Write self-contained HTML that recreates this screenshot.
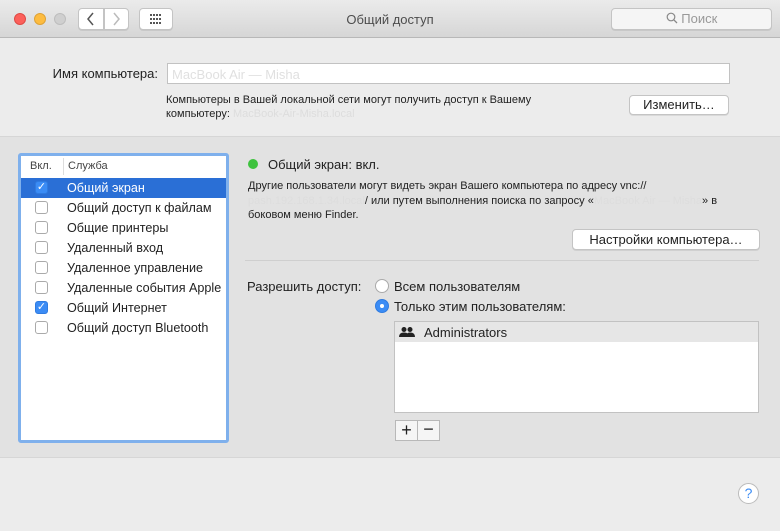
<!DOCTYPE html><html><head><meta charset="utf-8"><style>
*{box-sizing:border-box;margin:0;padding:0}
body{width:780px;height:531px;overflow:hidden;background:#ececec;font-family:"Liberation Sans",sans-serif;color:#222;position:relative;font-size:13px}
.a{position:absolute;white-space:nowrap}
.tb{position:absolute;left:0;top:0;width:780px;height:38px;background:linear-gradient(#ebebeb,#d6d6d6);border-bottom:1px solid #b8b8b8}
.dot{position:absolute;width:12px;height:12px;border-radius:50%;top:13px}
.btn{position:absolute;background:#fff;border:1px solid #c4c4c4;border-radius:4px;box-shadow:0 1px 0 rgba(0,0,0,.08);text-align:center;font-size:13px}
.cb{position:absolute;left:35px;width:13px;height:13px;border:1px solid #aaa;border-radius:3px;background:#fff}
.cb.on{background:#3b8cf5;border-color:#2f7be0;color:#fff;font-size:11px;line-height:11px;text-align:center}
.row{position:absolute;font-size:12.6px}
</style></head><body>
<div class="tb"></div>
<div class="dot" style="left:14px;background:#fc605b;border:1px solid #de4a45"></div>
<div class="dot" style="left:34px;background:#fdbc40;border:1px solid #dea236"></div>
<div class="dot" style="left:54px;background:#cfcfcf;border:1px solid #bdbdbd"></div>
<div class="btn" style="left:78px;top:8px;width:26px;height:22px;border-radius:4px 0 0 4px"><svg width="24" height="20" viewBox="0 0 24 20"><path d="M14 4 L9 10 L14 16" fill="none" stroke="#555" stroke-width="1.5"/></svg></div>
<div class="btn" style="left:104px;top:8px;width:25px;height:22px;border-radius:0 4px 4px 0"><svg width="23" height="20" viewBox="0 0 23 20"><path d="M9 4 L14 10 L9 16" fill="none" stroke="#bbb" stroke-width="1.5"/></svg></div>
<div class="btn" style="left:139px;top:8px;width:34px;height:22px"><svg width="32" height="20" viewBox="0 0 32 20"><g fill="#555"><rect x="10" y="5" width="2" height="2"/><rect x="13" y="5" width="2" height="2"/><rect x="16" y="5" width="2" height="2"/><rect x="19" y="5" width="2" height="2"/><rect x="10" y="9" width="2" height="2"/><rect x="13" y="9" width="2" height="2"/><rect x="16" y="9" width="2" height="2"/><rect x="19" y="9" width="2" height="2"/><rect x="10" y="13" width="2" height="2"/><rect x="13" y="13" width="2" height="2"/><rect x="16" y="13" width="2" height="2"/><rect x="19" y="13" width="2" height="2"/></g></svg></div>
<div class="a" style="left:0;width:780px;text-align:center;top:12px;color:#4d4d4d">Общий доступ</div>
<div class="btn" style="left:611px;top:8px;width:161px;height:22px;color:#999;line-height:20px;background:#f5f5f5"><svg width="12" height="12" viewBox="0 0 12 12" style="vertical-align:-1px"><circle cx="5" cy="5" r="3.8" fill="none" stroke="#888" stroke-width="1.2"/><path d="M7.8 7.8 L11 11" stroke="#888" stroke-width="1.3"/></svg> Поиск</div>

<div class="a" style="right:622px;top:66px">Имя компьютера:</div>
<div class="a" style="left:167px;top:63px;width:563px;height:21px;background:#fff;border:1px solid #c2c2c2;color:#e0e0e0;padding:3px 4px">MacBook Air — Misha</div>
<div class="a" style="left:166px;top:93px;font-size:11px;line-height:14px">Компьютеры в Вашей локальной сети могут получить доступ к Вашему<br>компьютеру: <span style="color:#ddd">MacBook-Air-Misha.local</span></div>
<div class="btn" style="left:629px;top:95px;width:100px;height:20px;line-height:18px">Изменить…</div>

<div class="a" style="left:0;top:136px;width:780px;height:322px;background:#e2e2e2;border-top:1px solid #d6d6d6;border-bottom:1px solid #d6d6d6"></div>

<div class="a" style="left:18px;top:153px;width:211px;height:290px;background:#fff;border:3px solid #7fb0ec;border-radius:3px"></div>
<div class="a" style="left:30px;top:160px;font-size:11px;color:#444">Вкл.</div>
<div class="a" style="left:63px;top:158px;width:1px;height:17px;background:#ddd"></div>
<div class="a" style="left:68px;top:160px;font-size:11px;color:#444">Служба</div>
<div class="a" style="left:21px;top:178px;width:205px;height:20px;background:#2a6fd6"></div>
<div class="cb on" style="top:181px">✓</div><div class="row a" style="left:67px;top:181px;color:#fff">Общий экран</div>
<div class="cb" style="top:201px"></div><div class="row a" style="left:67px;top:201px">Общий доступ к файлам</div>
<div class="cb" style="top:221px"></div><div class="row a" style="left:67px;top:221px">Общие принтеры</div>
<div class="cb" style="top:241px"></div><div class="row a" style="left:67px;top:241px">Удаленный вход</div>
<div class="cb" style="top:261px"></div><div class="row a" style="left:67px;top:261px">Удаленное управление</div>
<div class="cb" style="top:281px"></div><div class="row a" style="left:67px;top:281px">Удаленные события Apple</div>
<div class="cb on" style="top:301px">✓</div><div class="row a" style="left:67px;top:301px">Общий Интернет</div>
<div class="cb" style="top:321px"></div><div class="row a" style="left:67px;top:321px">Общий доступ Bluetooth</div>

<div class="a" style="left:248px;top:159px;width:10px;height:10px;border-radius:50%;background:#3ec23e"></div>
<div class="a" style="left:268px;top:157px">Общий экран: вкл.</div>
<div class="a" style="left:248px;top:179px;font-size:11px;line-height:14.5px">Другие пользователи могут видеть экран Вашего компьютера по адресу vnc://<br><span style="color:#ddd">pash.192.168.1.34.local</span>/ или путем выполнения поиска по запросу «<span style="color:#ddd">MacBook Air — Misha</span>» в<br>боковом меню Finder.</div>
<div class="btn" style="left:572px;top:229px;width:188px;height:21px;line-height:19px">Настройки компьютера…</div>
<div class="a" style="left:245px;top:260px;width:514px;height:1px;background:#cfcfcf"></div>
<div class="a" style="left:247px;top:279px">Разрешить доступ:</div>
<div class="a" style="left:375px;top:279px;width:14px;height:14px;border-radius:50%;background:#fff;border:1px solid #aaa"></div>
<div class="a" style="left:394px;top:279px">Всем пользователям</div>
<div class="a" style="left:375px;top:299px;width:14px;height:14px;border-radius:50%;background:#3b8cf5;border:1px solid #2f7be0"></div>
<div class="a" style="left:380px;top:304px;width:4px;height:4px;border-radius:50%;background:#fff"></div>
<div class="a" style="left:394px;top:299px">Только этим пользователям:</div>
<div class="a" style="left:394px;top:321px;width:365px;height:92px;background:#fff;border:1px solid #c2c2c2"></div>
<div class="a" style="left:395px;top:322px;width:363px;height:20px;background:#e6e6e6"></div>
<svg class="a" style="left:399px;top:326px" width="16" height="12" viewBox="0 0 16 12"><g fill="#222"><circle cx="5" cy="3.5" r="2.5"/><path d="M0 11 Q0 6.5 5 6.5 Q10 6.5 10 11Z"/><circle cx="11" cy="3.5" r="2.5"/><path d="M7 11 Q7 6.5 11 6.5 Q16 6.5 16 11Z"/></g></svg>
<div class="a" style="left:424px;top:325px">Administrators</div>
<div class="a" style="left:395px;top:420px;width:23px;height:21px;background:#f5f5f5;border:1px solid #b8b8b8;text-align:center;font-size:18px;line-height:18px">+</div>
<div class="a" style="left:417px;top:420px;width:23px;height:21px;background:#f5f5f5;border:1px solid #b8b8b8;text-align:center;font-size:18px;line-height:17px">−</div>
<div class="a" style="left:738px;top:483px;width:21px;height:21px;border-radius:50%;background:#fff;border:1px solid #bbb;text-align:center;color:#3b8cf5;font-size:14px;line-height:19px">?</div>
</body></html>
